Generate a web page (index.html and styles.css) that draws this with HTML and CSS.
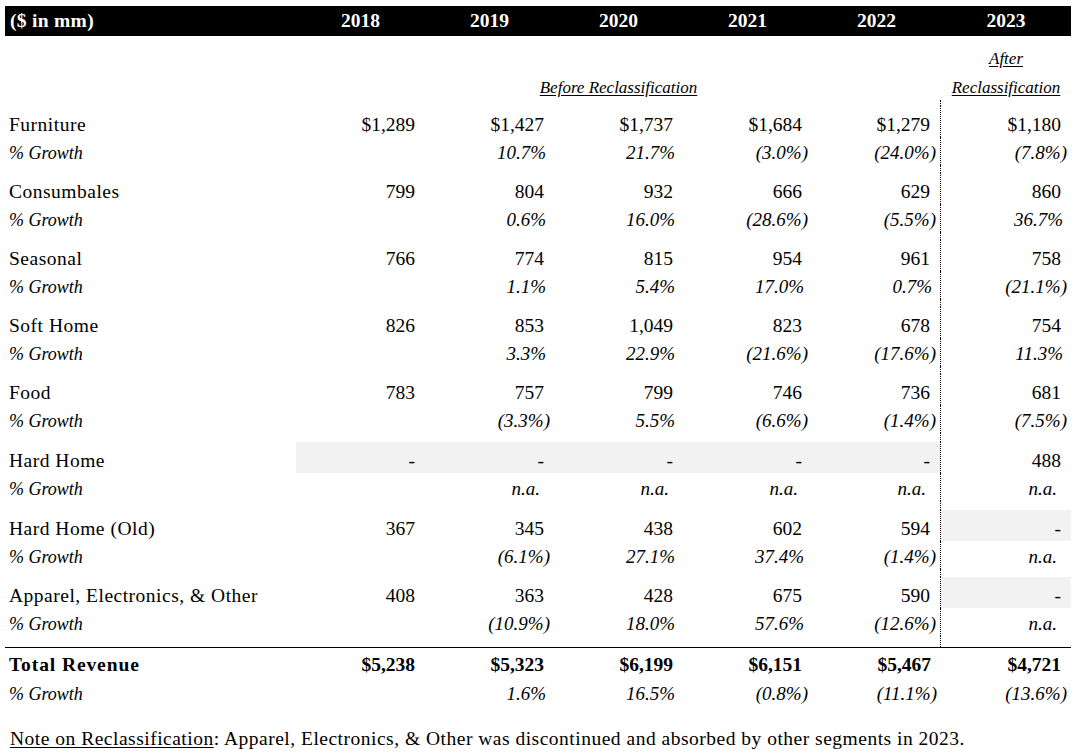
FILE: index.html
```html
<!DOCTYPE html>
<html lang="en">
<head>
<meta charset="utf-8">
<title>Revenue by Segment</title>
<link rel="stylesheet" href="styles.css">
</head>
<body>
<table class="fin">
  <colgroup>
    <col class="c-label"><col class="c-yr"><col class="c-yr"><col class="c-yr"><col class="c-yr"><col class="c-yr"><col class="c-last">
  </colgroup>
  <thead>
    <tr class="hdr"><th class="lbl">($ in mm)</th><th>2018</th><th>2019</th><th>2020</th><th>2021</th><th>2022</th><th>2023</th></tr>
  </thead>
  <tbody>
    <tr class="sub1"><td></td><td></td><td></td><td></td><td></td><td></td><td class="cap"><span class="u">After</span></td></tr>
    <tr class="sub2"><td></td><td></td><td></td><td class="cap"><div class="over"><span class="u">Before Reclassification</span></div></td><td></td><td></td><td class="cap"><span class="u">Reclassification</span></td></tr>
    <tr class="sp6"><td></td><td></td><td></td><td></td><td></td><td class="dv"></td><td></td></tr>

    <tr class="main"><td class="lbl">Furniture</td><td>$1,289</td><td>$1,427</td><td>$1,737</td><td>$1,684</td><td class="dv">$1,279</td><td>$1,180</td></tr>
    <tr class="gr"><td class="lbl">% Growth</td><td></td><td>10.7%</td><td>21.7%</td><td class="neg">(3.0%)</td><td class="neg dv">(24.0%)</td><td class="neg">(7.8%)</td></tr>
    <tr class="sp"><td></td><td></td><td></td><td></td><td></td><td class="dv"></td><td></td></tr>

    <tr class="main"><td class="lbl">Consumbales</td><td>799</td><td>804</td><td>932</td><td>666</td><td class="dv">629</td><td>860</td></tr>
    <tr class="gr"><td class="lbl">% Growth</td><td></td><td>0.6%</td><td>16.0%</td><td class="neg">(28.6%)</td><td class="neg dv">(5.5%)</td><td>36.7%</td></tr>
    <tr class="sp"><td></td><td></td><td></td><td></td><td></td><td class="dv"></td><td></td></tr>

    <tr class="main"><td class="lbl">Seasonal</td><td>766</td><td>774</td><td>815</td><td>954</td><td class="dv">961</td><td>758</td></tr>
    <tr class="gr"><td class="lbl">% Growth</td><td></td><td>1.1%</td><td>5.4%</td><td>17.0%</td><td class="dv">0.7%</td><td class="neg">(21.1%)</td></tr>
    <tr class="sp"><td></td><td></td><td></td><td></td><td></td><td class="dv"></td><td></td></tr>

    <tr class="main"><td class="lbl">Soft Home</td><td>826</td><td>853</td><td>1,049</td><td>823</td><td class="dv">678</td><td>754</td></tr>
    <tr class="gr"><td class="lbl">% Growth</td><td></td><td>3.3%</td><td>22.9%</td><td class="neg">(21.6%)</td><td class="neg dv">(17.6%)</td><td>11.3%</td></tr>
    <tr class="sp"><td></td><td></td><td></td><td></td><td></td><td class="dv"></td><td></td></tr>

    <tr class="main"><td class="lbl">Food</td><td>783</td><td>757</td><td>799</td><td>746</td><td class="dv">736</td><td>681</td></tr>
    <tr class="gr"><td class="lbl">% Growth</td><td></td><td class="neg">(3.3%)</td><td>5.5%</td><td class="neg">(6.6%)</td><td class="neg dv">(1.4%)</td><td class="neg">(7.5%)</td></tr>
    <tr class="sp sp9"><td></td><td></td><td></td><td></td><td></td><td class="dv"></td><td></td></tr>

    <tr class="main"><td class="lbl">Hard Home</td><td class="shade">-</td><td class="shade">-</td><td class="shade">-</td><td class="shade">-</td><td class="shade dv">-</td><td>488</td></tr>
    <tr class="gr"><td class="lbl">% Growth</td><td></td><td class="na">n.a.</td><td class="na">n.a.</td><td class="na">n.a.</td><td class="na dv">n.a.</td><td class="na">n.a.</td></tr>
    <tr class="sp sp9"><td></td><td></td><td></td><td></td><td></td><td class="dv"></td><td></td></tr>

    <tr class="main"><td class="lbl">Hard Home (Old)</td><td>367</td><td>345</td><td>438</td><td>602</td><td class="dv">594</td><td class="shade">-</td></tr>
    <tr class="gr"><td class="lbl">% Growth</td><td></td><td class="neg">(6.1%)</td><td>27.1%</td><td>37.4%</td><td class="neg dv">(1.4%)</td><td class="na">n.a.</td></tr>
    <tr class="sp"><td></td><td></td><td></td><td></td><td></td><td class="dv"></td><td></td></tr>

    <tr class="main"><td class="lbl">Apparel, Electronics, &amp; Other</td><td>408</td><td>363</td><td>428</td><td>675</td><td class="dv">590</td><td class="shade">-</td></tr>
    <tr class="gr"><td class="lbl">% Growth</td><td></td><td class="neg">(10.9%)</td><td>18.0%</td><td>57.6%</td><td class="neg dv">(12.6%)</td><td class="na">n.a.</td></tr>
    <tr class="sp-end"><td></td><td></td><td></td><td></td><td></td><td class="dv"></td><td></td></tr>

    <tr class="main total"><td class="lbl">Total Revenue</td><td>$5,238</td><td>$5,323</td><td>$6,199</td><td>$6,151</td><td>$5,467</td><td>$4,721</td></tr>
    <tr class="gr"><td class="lbl">% Growth</td><td></td><td>1.6%</td><td>16.5%</td><td class="neg">(0.8%)</td><td class="neg">(11.1%)</td><td class="neg">(13.6%)</td></tr>
  </tbody>
</table>
<p class="note"><span class="u">Note on Reclassification</span>: Apparel, Electronics, &amp; Other was discontinued and absorbed by other segments in 2023.</p>
</body>
</html>
```

FILE: styles.css
```css
html, body {
  margin: 0;
  padding: 0;
  background: #fff;
}

body {
  font-family: "Liberation Serif", "Times New Roman", serif;
  font-size: 19.5px;
  color: #000;
}

.fin {
  margin: 6px 0 0 5px;
  width: 1066px;
  table-layout: fixed;
  border-collapse: separate;
  border-spacing: 0;
}

.c-label { width: 291px; }
.c-yr { width: 129px; }
.c-last { width: 130px; }

.fin th,
.fin td {
  padding: 0 10px 0 4px;
  line-height: 22px;
  text-align: right;
  vertical-align: bottom;
  white-space: nowrap;
  font-weight: normal;
}

/* header bar */
.hdr { height: 30px; }
.hdr th {
  background: #000;
  color: #fff;
  font-weight: bold;
  text-align: center;
  vertical-align: middle;
  padding: 0;
}
.hdr th.lbl {
  text-align: left;
  padding-left: 5px;
  letter-spacing: 0.3px;
}

/* reclassification captions */
.sub1 { height: 35px; }
.sub2 { height: 29px; }
.sub1 td, .sub2 td { padding-bottom: 2px; }
.fin td.cap {
  font-style: italic;
  font-size: 17px;
  line-height: 20px;
  text-align: center;
  padding-left: 0;
  padding-right: 0;
}
.over {
  display: flex;
  justify-content: center;
}
.u {
  text-decoration: underline;
  text-underline-offset: 2px;
}

/* spacers */
.sp6 { height: 6px; }
.sp { height: 8px; }
.sp.sp9 { height: 9px; }
.sp-end { height: 11px; }
.sp6 td, .sp td, .sp-end td { padding: 0; line-height: 0; }

/* data rows */
.main { height: 31px; }
.main td { padding-bottom: 1px; }
.fin td.lbl {
  text-align: left;
  padding-left: 4px;
  letter-spacing: 0.5px;
}

.gr { height: 28px; }
.gr td {
  font-style: italic;
  font-size: 19px;
  line-height: 20px;
  padding-bottom: 2px;
  padding-right: 8px;
}
.fin .gr td.lbl {
  font-size: 18px;
  letter-spacing: 0;
}
.fin .gr td.neg { padding-right: 4px; }
.fin .gr td.na { padding-right: 14px; }

.dv { border-right: 1px dotted #000; }
.shade { background: #f2f2f2; }

/* total */
.total td {
  font-weight: bold;
  border-top: 1px solid #000;
  padding-bottom: 2px;
}
.fin .total td.lbl { letter-spacing: 0.9px; }

.note {
  margin: 22px 0 0 10px;
  line-height: 22px;
  letter-spacing: 0.5px;
}
```
